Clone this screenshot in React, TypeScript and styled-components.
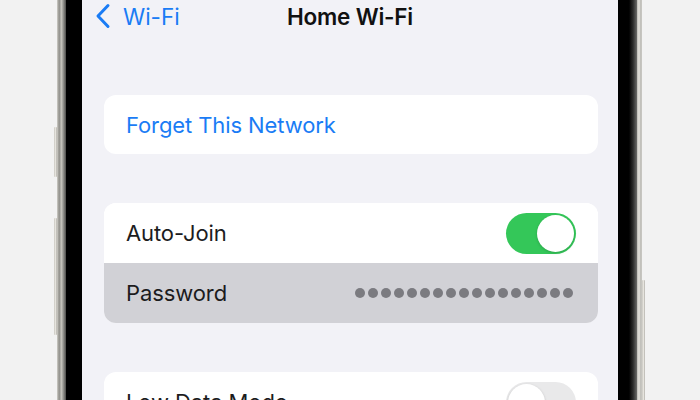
import React from "react";
import styled, { createGlobalStyle } from "styled-components";

const Global = createGlobalStyle`
  html, body { margin: 0; padding: 0; background: #f2f2f2; }
  body { width: 700px; height: 400px; overflow: hidden; font-family: Inter, "Liberation Sans", sans-serif; }
`;

const Page = styled.div`
  width: 700px;
  height: 400px;
  display: flex;
  justify-content: flex-start;
  padding-left: 57px;
  box-sizing: border-box;
  overflow: hidden;
`;

const Rim = styled.div`
  position: relative;
  width: 585px;
  height: 400px;
  box-sizing: border-box;
  display: flex;
  padding: 0 5px 0 9px;
  background: linear-gradient(
    90deg,
    #d9d7d1 0px,
    #a9a8a2 1px,
    #8f8e89 3px,
    #cfcdc6 4px,
    #9c9b96 6px,
    #4a4a48 9px,
    #4a4a48 calc(100% - 6px),
    #b9b8b3 calc(100% - 5px),
    #e4e2dc calc(100% - 3px),
    #b7b6b1 calc(100% - 1px),
    #d5d4cf 100%
  );
`;

const SideButton = styled.div<{ $side: "left" | "right"; $top: number; $h: number }>`
  position: absolute;
  top: ${(p) => p.$top}px;
  height: ${(p) => p.$h}px;
  width: 3px;
  ${(p) => (p.$side === "left" ? "left: -3px;" : "right: -3px;")}
  background: linear-gradient(90deg, #c9c7c0, #e6e4de, #b2b0aa);
  border-radius: 1px;
`;

const Bezel = styled.div`
  flex: 1;
  display: flex;
  padding: 0 19px 0 16px;
  background: linear-gradient(90deg, #000 0, #000 calc(100% - 8px), #2a2a2a calc(100% - 4px), #6a6a68 100%);
`;

const Screen = styled.div`
  flex: 1;
  background: #f2f2f7;
  display: flex;
  flex-direction: column;
  overflow: hidden;
`;

const Nav = styled.div`
  height: 32px;
  flex-shrink: 0;
  display: grid;
  grid-template-columns: 1fr auto 1fr;
  align-items: center;
`;

const Back = styled.div`
  display: flex;
  align-items: center;
  gap: 12px;
  margin-left: 13px;
  color: #1a7cf5;
  font-size: 22.5px;
`;

const Title = styled.div`
  font-size: 22.5px;
  font-weight: 600;
  color: #111;
  letter-spacing: -0.2px;
`;

const Content = styled.div`
  display: flex;
  flex-direction: column;
  gap: 49px;
  padding: 63px 20px 0 22px;
`;

const Card = styled.div`
  background: #fff;
  border-radius: 12px;
  overflow: hidden;
  display: flex;
  flex-direction: column;
  flex-shrink: 0;
`;

const Row = styled.div<{ $pressed?: boolean; $h?: number }>`
  height: ${(p) => p.$h ?? 60}px;
  display: flex;
  align-items: center;
  justify-content: space-between;
  padding: 0 22px;
  background: ${(p) => (p.$pressed ? "#d1d1d6" : "#fff")};
`;

const Label = styled.span<{ $link?: boolean }>`
  font-size: 22px;
  color: ${(p) => (p.$link ? "#1a7cf5" : "#1c1c1e")};
  letter-spacing: -0.1px;
`;

const Toggle = styled.div<{ $on?: boolean }>`
  width: 70px;
  height: 41px;
  border-radius: 21px;
  background: ${(p) => (p.$on ? "#34c759" : "#e9e9ea")};
  display: flex;
  align-items: center;
  justify-content: ${(p) => (p.$on ? "flex-end" : "flex-start")};
  padding: 0 2px;
  box-sizing: border-box;
`;

const Knob = styled.div`
  width: 37px;
  height: 37px;
  border-radius: 50%;
  background: #fff;
  box-shadow: 0 1px 3px rgba(0, 0, 0, 0.18);
`;

const Dots = styled.div`
  display: flex;
  gap: 3px;
  margin-right: 3px;
`;

const Dot = styled.span`
  width: 10px;
  height: 10px;
  border-radius: 50%;
  background: #7b7b80;
`;

export default function App() {
  return (
    <>
      <Global />
      <Page>
        <Rim>
          <SideButton $side="left" $top={127} $h={50} />
          <SideButton $side="left" $top={218} $h={117} />
          <SideButton $side="right" $top={280} $h={140} />
          <Bezel>
            <Screen>
              <Nav>
                <Back>
                  <svg width="16" height="26" viewBox="0 0 16 26">
                    <path d="M13 2.5 L3 13 L13 23.5" fill="none" stroke="#1a7cf5" strokeWidth="3" strokeLinecap="round" strokeLinejoin="round" />
                  </svg>
                  Wi-Fi
                </Back>
                <Title>Home Wi-Fi</Title>
                <div />
              </Nav>
              <Content>
                <Card>
                  <Row $h={59}>
                    <Label $link>Forget This Network</Label>
                  </Row>
                </Card>
                <Card>
                  <Row>
                    <Label>Auto-Join</Label>
                    <Toggle $on>
                      <Knob />
                    </Toggle>
                  </Row>
                  <Row $pressed>
                    <Label>Password</Label>
                    <Dots>
                      {Array.from({ length: 17 }).map((_, i) => (
                        <Dot key={i} />
                      ))}
                    </Dots>
                  </Row>
                </Card>
                <Card>
                  <Row>
                    <Label>Low Data Mode</Label>
                    <Toggle>
                      <Knob />
                    </Toggle>
                  </Row>
                </Card>
              </Content>
            </Screen>
          </Bezel>
        </Rim>
      </Page>
    </>
  );
}
